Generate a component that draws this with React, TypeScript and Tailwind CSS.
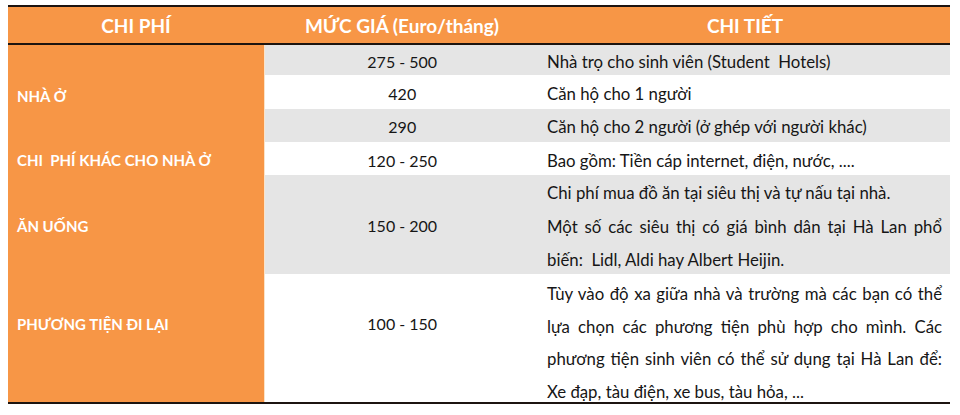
import React from "react";

const font = { fontFamily: "Lato, 'Noto Sans', sans-serif" };

// dòng giữa của đoạn canh đều: giãn hết chiều rộng
function JustLine({ children }: { children: React.ReactNode }) {
  return <div className="[text-align-last:justify] text-justify">{children}</div>;
}

export default function App() {
  return (
    <div className="w-[960px] h-[415px] bg-white pl-[8px] pt-[5px]" style={font}>
      <table className="w-[942px] border-collapse table-fixed">
        <thead>
          <tr className="h-[38px] bg-[#f79646] text-white font-bold text-[19px] border-t-2 border-b-2 border-[#1c1410]">
            <th className="w-[256px] text-center font-bold pt-[2px]">CHI PHÍ</th>
            <th className="w-[276px] text-center font-bold pt-[2px]">MỨC GIÁ (Euro/tháng)</th>
            <th className="w-[410px] text-center font-bold pt-[2px]">CHI TIẾT</th>
          </tr>
        </thead>
        <tbody className="text-[16px] text-[#161616]">
          <tr className="h-[31px] bg-[#e5e5e5]">
            <td
              rowSpan={3}
              className="bg-[#f79646] text-white text-[15px] font-bold pl-[9px] pt-[5px] border-r border-[#fbe3c8]"
            >
              NHÀ Ở
            </td>
            <td className="text-center pt-[4px]">275 - 500</td>
            <td className="pl-[7px] pt-[4px] text-[16.8px]">Nhà trọ cho sinh viên (Student&nbsp; Hotels)</td>
          </tr>
          <tr className="h-[34px] bg-white">
            <td className="text-center pt-[4px]">420</td>
            <td className="pl-[7px] pt-[4px] text-[16.8px]">Căn hộ cho 1 người</td>
          </tr>
          <tr className="h-[33px] bg-[#e5e5e5]">
            <td className="text-center pt-[3px]">290</td>
            <td className="pl-[7px] pt-[3px] text-[16.8px]">Căn hộ cho 2 người (ở ghép với người khác)</td>
          </tr>
          <tr className="h-[33px] bg-white">
            <td className="bg-[#f79646] text-white text-[15px] font-bold pl-[9px] pt-[4px] border-r border-[#fbe3c8]">
              CHI&nbsp; PHÍ KHÁC CHO NHÀ Ở
            </td>
            <td className="text-center pt-[4px]">120 - 250</td>
            <td className="pl-[7px] pt-[4px] text-[16.8px]">Bao gồm: Tiền cáp internet, điện, nước, ....</td>
          </tr>
          <tr className="h-[99px] bg-[#e5e5e5]">
            <td className="bg-[#f79646] text-white text-[15px] font-bold pl-[9px] pt-[3px] border-r border-[#fbe3c8]">
              ĂN UỐNG
            </td>
            <td className="text-center pt-[3px]">150 - 200</td>
            <td className="pl-[7px] pr-[8px] text-[16.8px]">
              <div className="h-[99px] pt-[1px] leading-[33.5px]">
                <div>Chi phí mua đồ ăn tại siêu thị và tự nấu tại nhà.</div>
                <JustLine>Một số các siêu thị có giá bình dân tại Hà Lan phổ</JustLine>
                <div>biến:&nbsp; Lidl, Aldi hay Albert Heijin.</div>
              </div>
            </td>
          </tr>
          <tr className="h-[128px] bg-white border-b-2 border-[#1c1410]">
            <td className="bg-[#f79646] text-white text-[15px] font-bold pl-[9px] pb-[28px] border-r border-[#fbe3c8]">
              PHƯƠNG TIỆN ĐI LẠI
            </td>
            <td className="text-center pb-[28px]">100 - 150</td>
            <td className="pl-[7px] pr-[8px] text-[16.8px]">
              <div className="h-[128px] pt-[4px] leading-[32.5px]">
                <JustLine>Tùy vào độ xa giữa nhà và trường mà các bạn có thể</JustLine>
                <JustLine>lựa chọn các phương tiện phù hợp cho mình. Các</JustLine>
                <JustLine>phương tiện sinh viên có thể sử dụng tại Hà Lan để:</JustLine>
                <div>Xe đạp, tàu điện, xe bus, tàu hỏa, ...</div>
              </div>
            </td>
          </tr>
        </tbody>
      </table>
    </div>
  );
}
